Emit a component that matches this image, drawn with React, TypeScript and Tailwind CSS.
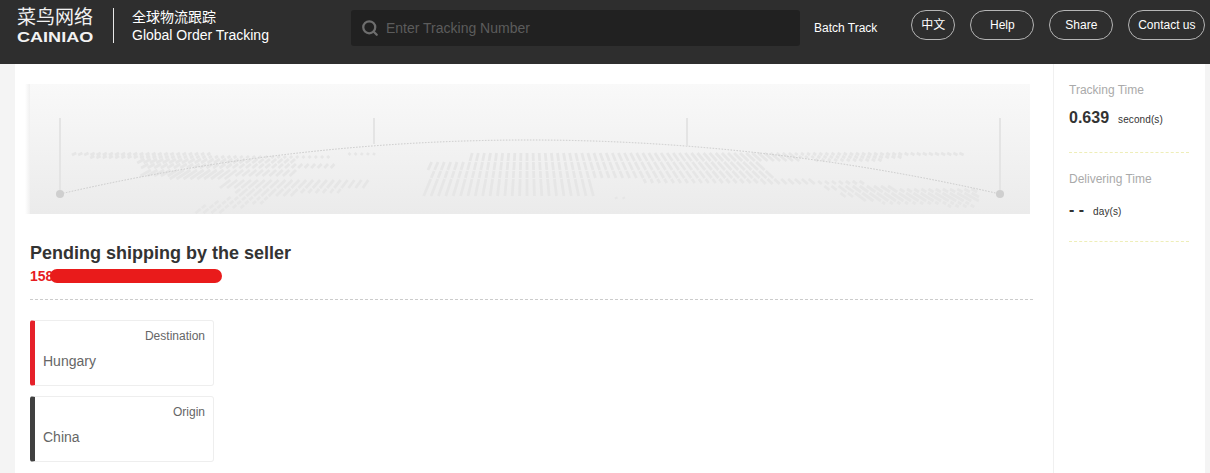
import React from 'react';
import { Search } from 'lucide-react';

const sans = 'font-["Liberation_Sans","Noto_Sans_CJK_SC",sans-serif]';

// blocks of the dotted world map: [top y, bottom y, from x, to x] in page coordinates
const mapBlocks: [number, number, number, number][] = [
  [153, 155, 72, 215], [153, 155, 350, 375], [153, 155, 760, 960],
  [156, 158, 90, 330], [156, 158, 770, 900],
  [159, 163, 140, 300], [159, 161, 810, 880],
  [153, 161, 470, 790],
  [162, 170, 428, 760], [164, 168, 145, 335],
  [170, 176, 150, 300], [171, 178, 428, 770],
  [176, 179, 170, 235], [179, 183, 640, 810],
  [180, 188, 225, 370], [179, 196, 428, 590], [181, 184, 760, 860],
  [186, 190, 820, 890],
  [189, 193, 235, 345], [189, 192, 840, 975],
  [193, 196, 240, 300], [193, 197, 840, 975],
  [197, 200, 230, 270], [197, 199, 610, 630], [197, 201, 860, 975],
  [201, 204, 215, 265], [202, 204, 880, 970],
  [205, 208, 205, 250], [205, 207, 945, 975],
  [209, 213, 198, 225],
];

// bars fan out from a vanishing point above the banner
const mapPath = mapBlocks
  .flatMap(([top, bottom, from, to]) => {
    const cx = 527;
    const bars: string[] = [];
    for (let u = -120; u <= 120; u++) {
      const x = cx + u * 6 * ((top + 50) / 200);
      if (x < from || x > to) continue;
      const x2 = cx + u * 6 * ((bottom + 50) / 200);
      bars.push(`M${x.toFixed(1)} ${top}L${x2.toFixed(1)} ${bottom}`);
    }
    return bars;
  })
  .join('');

const BannerMap = () => (
  <svg viewBox="25 84 1005 130" className="block h-[130px] w-[1005px]">
    <path d={mapPath} stroke="#e6e6e6" strokeWidth="2.8" fill="none" />
    <path d="M60 194Q527 86 1000 194" stroke="#c9c9c9" strokeWidth="1" strokeDasharray="1.5 1.5" fill="none" />
    <path d="M60 118V190M374 118V144M687 118V146M1000 118V190" stroke="#e4e4e4" strokeWidth="2" fill="none" />
    <circle cx="60" cy="194" r="4" fill="#cfcfcf" />
    <circle cx="1000" cy="194" r="4" fill="#cfcfcf" />
  </svg>
);

const HeaderButton = ({ label, width }: { label: string; width: string }) => (
  <button className={`h-[30px] ${width} rounded-[15px] border border-[#b5b5b5] text-xs text-white`}>{label}</button>
);

const PlaceCard = ({ label, place, accent }: { label: string; place: string; accent: string }) => (
  <div className={`h-[66px] w-[184px] rounded-[3px] border border-l-[5px] border-[#eeeeee] ${accent} pl-2 pr-2`}>
    <p className="mt-[6px] text-right text-xs leading-[18px] text-[#666666]">{label}</p>
    <p className="mt-[6px] text-sm leading-[20px] text-[#666666]">{place}</p>
  </div>
);

export default function App() {
  return (
    <div className={`h-[473px] w-[1210px] overflow-hidden bg-[#f4f4f4] ${sans}`}>
      <header className="flex h-16 items-start bg-[#2e2e2e] text-white">
        {/* Logo */}
        <div className="ml-[17px] mt-[7px] w-[76px] whitespace-nowrap text-[#f2f2f2]">
          <div className="text-[19px] leading-[22px]">菜鸟网络</div>
          <div className="origin-left scale-x-[1.29] text-sm font-bold leading-[16px]">CAINIAO</div>
        </div>
        <div className="ml-5 mt-2 h-[35px] w-px bg-[#e8e8e8]" />
        <div className="ml-[18px] mt-[8px] text-sm leading-[18px]">
          <div>全球物流跟踪</div>
          <div>Global Order Tracking</div>
        </div>

        {/* Search */}
        <div className="ml-[82px] mt-[10px] flex h-9 w-[449px] items-center rounded-[3px] bg-[#212121] pl-[10px]">
          <Search className="h-[18px] w-[18px] text-[#6e6e6e]" strokeWidth={3} />
          <span className="ml-[7px] text-sm text-[#5c5c5c]">Enter Tracking Number</span>
        </div>
        <span className="ml-[14px] mt-[20px] text-xs leading-4">Batch Track</span>

        <nav className="ml-[34px] mt-[10px] flex gap-[15px]">
          <HeaderButton label="中文" width="w-[44px]" />
          <HeaderButton label="Help" width="w-[64px]" />
          <HeaderButton label="Share" width="w-[64px]" />
          <HeaderButton label="Contact us" width="w-[77px]" />
        </nav>
      </header>

      <div className="ml-[15px] flex h-[409px] w-[1190px] bg-white">
        <main className="mr-5 w-[1018px] shrink-0 pl-[15px] pt-5">
          <div className="relative ml-[-5px] h-[130px] w-[1005px] bg-gradient-to-b from-[#f9f9f9] to-[#ebebeb]">
            <div className="absolute inset-y-0 left-0 w-[5px] bg-gradient-to-r from-white to-[#f0f0f0]" />
            <BannerMap />
          </div>

          <h1 className="mt-[28px] text-lg font-bold leading-[22px] text-[#333333]">Pending shipping by the seller</h1>
          <div className="relative mt-[3px] h-[18px] text-sm font-bold leading-[18px] text-[#e71c23]">
            158
            <span className="absolute left-[20px] top-[2px] h-[14px] w-[172px] rounded-[7px] bg-[#e91b1b]" />
          </div>
          <div className="mt-[14px] border-t border-dashed border-[#cccccc]" />

          <div className="mt-5 flex flex-col gap-[10px]">
            <PlaceCard label="Destination" place="Hungary" accent="border-l-[#e6212a]" />
            <PlaceCard label="Origin" place="China" accent="border-l-[#404040]" />
          </div>
        </main>

        <aside className="flex-1 border-l border-[#f0f0f0] pl-[15px] pr-4 pt-[17px]">
          <p className="text-xs leading-[18px] text-[#aaaaaa]">Tracking Time</p>
          <p className="mt-[7px] h-[47px] border-b border-dashed border-[#eeeeb8] leading-[24px] text-[#333333]">
            <span className="text-base font-bold">0.639</span>
            <span className="ml-[9px] text-[10px] tracking-[0.1px]">second(s)</span>
          </p>
          <p className="mt-[17px] text-xs leading-[18px] text-[#aaaaaa]">Delivering Time</p>
          <p className="mt-[8px] h-[46px] border-b border-dashed border-[#eeeeb8] pt-[2px] leading-[24px] text-[#333333]">
            <span className="text-base font-bold">- -</span>
            <span className="ml-[9px] text-[10px] tracking-[0.1px]">day(s)</span>
          </p>
        </aside>
      </div>
    </div>
  );
}
